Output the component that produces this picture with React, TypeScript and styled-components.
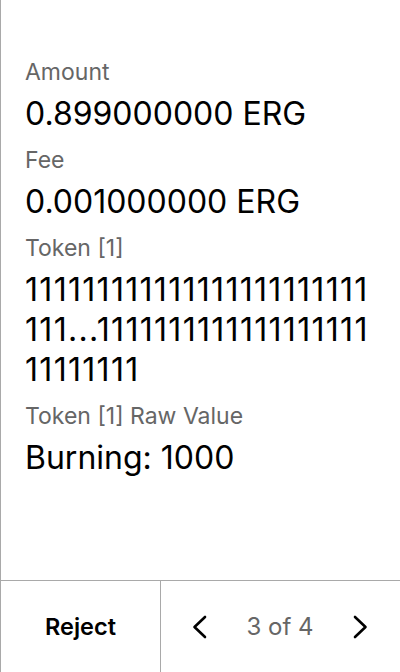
import React from "react";
import styled, { createGlobalStyle } from "styled-components";

const Global = createGlobalStyle`
  html, body { margin: 0; padding: 0; background: #fff; }
  body { font-family: Inter, "Noto Sans", sans-serif; color: #000; }
  * { box-sizing: border-box; }
`;

const Screen = styled.div`
  height: 672px;
  width: 400px;
  display: flex;
  flex-direction: column;
  border-left: 1px solid #a9a9a9;
  background: #fff;
`;

const Content = styled.div`
  flex: 1;
  padding: 58px 25px 0 24px;
  display: flex;
  flex-direction: column;
`;

const Field = styled.div`
  display: flex;
  flex-direction: column;
  margin-bottom: 12px;
`;

const Label = styled.div`
  font-size: 23px;
  line-height: 28px;
  color: #666;
  margin-bottom: 8px;
`;

const Value = styled.div<{ $tracking?: number }>`
  font-size: 32px;
  line-height: 40px;
  color: #000;
  letter-spacing: ${(p) => p.$tracking ?? 0}px;
  word-break: break-all;
`;

const Footer = styled.div`
  height: 92px;
  border-top: 1px solid #a9a9a9;
  display: grid;
  grid-template-columns: 160px 1fr;
`;

const RejectCell = styled.button`
  border: none;
  border-right: 1px solid #a9a9a9;
  background: transparent;
  font-family: Inter, sans-serif;
  font-size: 23.5px;
  font-weight: 600;
  color: #000;
  display: flex;
  align-items: center;
  justify-content: center;
  padding: 0;
`;

const Pager = styled.div`
  display: flex;
  align-items: center;
  justify-content: space-between;
  padding: 0 32px 0 31px;
`;

const Arrow = styled.button`
  border: none;
  background: transparent;
  padding: 0;
  width: 16px;
  height: 30px;
  display: flex;
  align-items: center;
  justify-content: center;
`;

const PageText = styled.span`
  font-size: 24px;
  color: #666;
`;

const Chevron = ({ dir }: { dir: "left" | "right" }) => (
  <svg width="16" height="26" viewBox="0 0 16 26" fill="none">
    <path
      d={dir === "left" ? "M13 3 L2.5 13 L13 23" : "M3 3 L13.5 13 L3 23"}
      stroke="#000"
      strokeWidth="2.6"
      strokeLinecap="round"
      strokeLinejoin="round"
    />
  </svg>
);

const ones = "1".repeat(27);

export default function App() {
  return (
    <>
      <Global />
      <Screen>
        <Content>
          <Field>
            <Label>Amount</Label>
            <Value>0.899000000 ERG</Value>
          </Field>
          <Field>
            <Label>Fee</Label>
            <Value>0.001000000 ERG</Value>
          </Field>
          <Field>
            <Label>Token [1]</Label>
            <Value $tracking={1.3}>
              {ones}...{ones}
            </Value>
          </Field>
          <Field>
            <Label>Token [1] Raw Value</Label>
            <Value>Burning: 1000</Value>
          </Field>
        </Content>
        <Footer>
          <RejectCell>Reject</RejectCell>
          <Pager>
            <Arrow>
              <Chevron dir="left" />
            </Arrow>
            <PageText>3 of 4</PageText>
            <Arrow>
              <Chevron dir="right" />
            </Arrow>
          </Pager>
        </Footer>
      </Screen>
    </>
  );
}
